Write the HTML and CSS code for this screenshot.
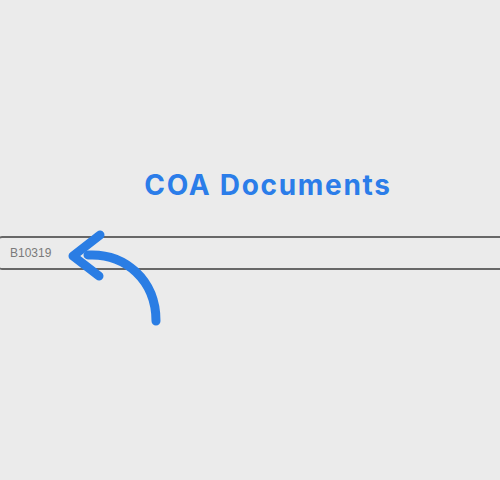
FILE: index.html
```html
<!DOCTYPE html>
<html>
<head>
<meta charset="utf-8">
<link rel="stylesheet" href="styles.css">
</head>
<body>
<div class="page">
  <h1 class="title">COA Documents</h1>
  <div class="field-wrap">
    <div class="field">B10319</div>
    <svg class="arrow" width="120" height="110" viewBox="0 0 120 110">
      <path d="M28 27 C 65 25, 96 52, 96 93" fill="none" stroke="#2a7de4" stroke-width="9" stroke-linecap="round"/>
      <path d="M40 7 L 13 28 L 39 48" fill="none" stroke="#2a7de4" stroke-width="9" stroke-linecap="round" stroke-linejoin="round"/>
    </svg>
  </div>
</div>
</body>
</html>
```
FILE: styles.css
```css
html, body {
  margin: 0;
  padding: 0;
  background: #ebebeb;
  overflow: hidden;
}
.page {
  width: 500px;
  height: 480px;
  overflow: hidden;
}
.title {
  margin: 0;
  padding-top: 168px;
  padding-left: 36px;
  text-align: center;
  font-family: Inter, "Liberation Sans", sans-serif;
  font-weight: 700;
  font-size: 28px;
  letter-spacing: 1.7px;
  line-height: 34px;
  color: #2b7de9;
}
.field-wrap {
  position: relative;
  margin-top: 34px;
}
.field {
  margin-left: -3px;
  width: 500px;
  height: 30px;
  box-sizing: content-box;
  border: 2px solid #676767;
  border-radius: 5px;
  padding-left: 11px;
  font-family: "Liberation Sans", Arial, sans-serif;
  font-size: 12px;
  line-height: 30px;
  color: #7a7a7a;
}
.arrow {
  position: absolute;
  left: 60px;
  top: -8px;
}
```
